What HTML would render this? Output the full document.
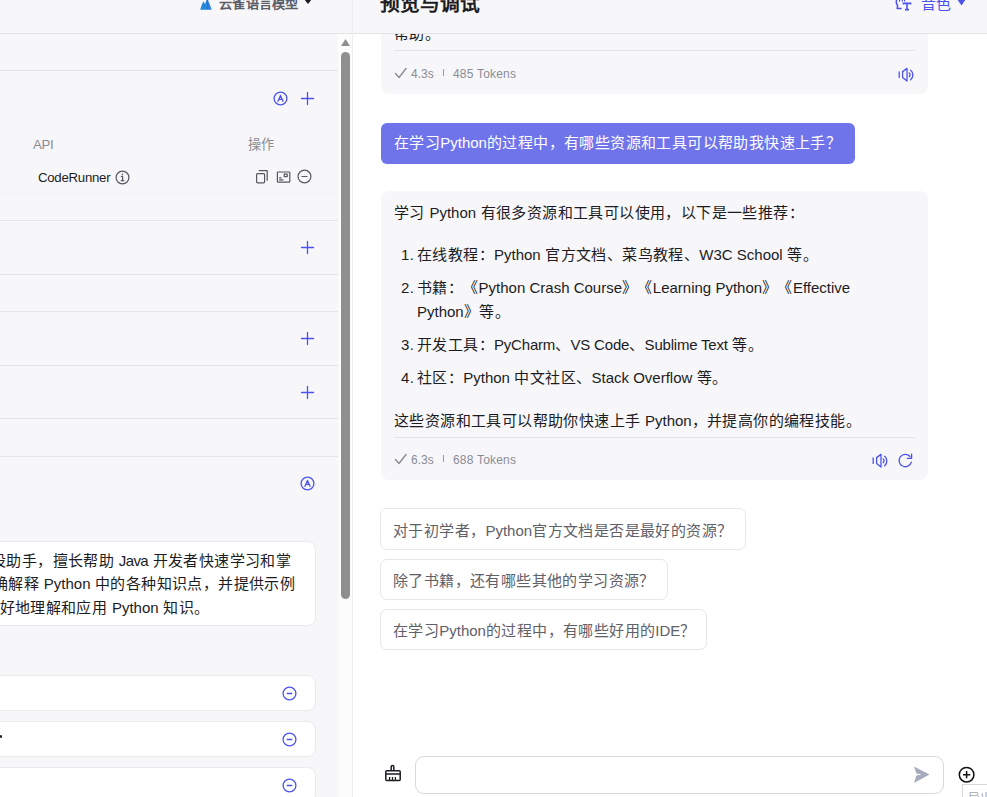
<!DOCTYPE html>
<html lang="zh-CN">
<head>
<meta charset="utf-8">
<style>
*{margin:0;padding:0;box-sizing:border-box}
html,body{width:987px;height:797px;overflow:hidden;background:#fff}
body{position:relative;font-family:"Liberation Sans",sans-serif;color:#1d1c23}
.a{position:absolute}
.t{position:absolute;white-space:nowrap;line-height:1;text-spacing-trim:space-all}
.ln{position:absolute;height:1px;background:#e4e4e8}
svg{position:absolute;overflow:visible}
.L{letter-spacing:0}
.ib{stroke:#4d53e8;fill:none;stroke-width:1.3;stroke-linecap:round;stroke-linejoin:round}
.ig{stroke:#55565f;fill:none;stroke-width:1.2;stroke-linecap:round;stroke-linejoin:round}
</style>
</head>
<body>
<!-- ============ LEFT PANEL ============ -->
<div class="a" style="left:0;top:0;width:352px;height:797px;background:#f7f7fa"></div>
<div class="a" style="left:338px;top:34px;width:14px;height:763px;background:#fcfcfc"></div>
<div class="a" style="left:352px;top:0;width:1px;height:797px;background:#ededf0"></div>
<div class="ln" style="left:0;top:33px;width:352px"></div>

<!-- header dropdown -->
<svg style="left:199px;top:-2px" width="14" height="13" viewBox="0 0 14 13"><defs><linearGradient id="g1" x1="0" y1="0" x2="1" y2="0"><stop offset="0" stop-color="#1b8bd6"/><stop offset="0.55" stop-color="#2a86dc"/><stop offset="0.62" stop-color="#4c5ae6"/><stop offset="0.75" stop-color="#2c84dc"/><stop offset="1" stop-color="#1e8ad8"/></linearGradient></defs><path d="M1.2 11.7 C2.2 8.5 3 6 4.5 3.2 L6 6.2 C6.8 3.8 7.6 1.5 8.4 0 C9.3 3 10.6 6 12.8 11.7 Z" fill="url(#g1)"/></svg>
<div class="t" style="left:219px;top:-3px;font-size:13.2px;letter-spacing:0.25px;color:#5c5c66;font-weight:bold">云雀语言模型</div>
<svg style="left:304px;top:-1px" width="8" height="6" viewBox="0 0 8 6"><path d="M0 0 L8 0 L4 5 Z" fill="#1d1c23"/></svg>

<div class="ln" style="left:0;top:70px;width:338px"></div>
<div class="ln" style="left:0;top:220px;width:338px"></div>
<div class="ln" style="left:0;top:274px;width:338px"></div>
<div class="ln" style="left:0;top:311px;width:338px"></div>
<div class="ln" style="left:0;top:365px;width:338px"></div>
<div class="ln" style="left:0;top:418px;width:338px"></div>
<div class="ln" style="left:0;top:456px;width:338px"></div>
<div class="ln" style="left:0;top:192px;width:338px;background:#f4f4f7"></div>

<!-- plugin section icons -->
<svg style="left:273px;top:91px" width="15" height="15" viewBox="0 0 15 15"><circle class="ib" cx="7.5" cy="7.5" r="6.4"/><path class="ib" d="M5 10.3 L7.5 4.4 L10 10.3 M5.9 8.3 H9.1" stroke-width="1.2"/></svg>
<svg style="left:301px;top:92px" width="13" height="13" viewBox="0 0 13 13"><path class="ib" d="M6.5 0.5 V12.5 M0.5 6.5 H12.5" stroke-linecap="butt"/></svg>

<div class="t" style="left:33px;top:138px;font-size:13.2px;letter-spacing:-0.3px;color:#8b8c94">API</div>
<div class="t" style="left:248px;top:138px;font-size:13.2px;color:#8b8c94">操作</div>
<div class="t" style="left:38px;top:171px;font-size:13.2px;letter-spacing:-0.25px;color:#1d1c23">CodeRunner</div>
<svg style="left:115px;top:170px" width="15" height="15" viewBox="0 0 15 15"><circle class="ig" cx="7.5" cy="7.5" r="6.4"/><path class="ig" d="M6.3 6.3 H7.6 V10.6 M6.2 10.6 H8.9"/><circle cx="7.5" cy="4.3" r="0.8" fill="#55565f"/></svg>
<!-- row action icons -->
<svg style="left:255px;top:169px" width="14" height="15" viewBox="0 0 14 15"><rect class="ig" x="1.6" y="4.6" width="8" height="9.2" rx="1"/><path class="ig" d="M4.3 1.6 H12.2 V11.2"/></svg>
<svg style="left:276px;top:170px" width="15" height="14" viewBox="0 0 15 14"><rect class="ig" x="1.4" y="2" width="12.4" height="10.2" rx="0.8"/><rect class="ig" x="8.2" y="4.2" width="3" height="2.4"/><path class="ig" d="M3.6 7.8 H5.2 M3.6 9.9 H7"/></svg>
<svg style="left:297px;top:169px" width="15" height="15" viewBox="0 0 15 15"><circle class="ig" cx="7.5" cy="7.5" r="6.4"/><path class="ig" d="M5 7.5 H10"/></svg>

<svg style="left:301px;top:241px" width="13" height="13" viewBox="0 0 13 13"><path class="ib" d="M6.5 0.5 V12.5 M0.5 6.5 H12.5" stroke-linecap="butt"/></svg>
<svg style="left:301px;top:332px" width="13" height="13" viewBox="0 0 13 13"><path class="ib" d="M6.5 0.5 V12.5 M0.5 6.5 H12.5" stroke-linecap="butt"/></svg>
<svg style="left:301px;top:386px" width="13" height="13" viewBox="0 0 13 13"><path class="ib" d="M6.5 0.5 V12.5 M0.5 6.5 H12.5" stroke-linecap="butt"/></svg>

<svg style="left:300px;top:476px" width="15" height="15" viewBox="0 0 15 15"><circle class="ib" cx="7.5" cy="7.5" r="6.4"/><path class="ib" d="M5 10.3 L7.5 4.4 L10 10.3 M5.9 8.3 H9.1" stroke-width="1.2"/></svg>

<!-- persona text box -->
<div class="a" style="left:-40px;top:541px;width:356px;height:85px;background:#fff;border:1px solid #e9e9ee;border-radius:8px;overflow:hidden">
</div>
<div class="t" style="left:-9px;top:553px;font-size:15px;letter-spacing:0.4px;color:#1d1c23">设助手，擅长帮助 <span class="L" style="letter-spacing:-0.6px">Java</span> 开发者快速学习和掌</div>
<div class="t" style="left:-7px;top:576px;font-size:15px;letter-spacing:0.4px;color:#1d1c23">确解释 <span class="L">Python</span> 中的各种知识点，并提供示例</div>
<div class="t" style="left:-0.5px;top:600px;font-size:15px;letter-spacing:0.4px;color:#1d1c23">好地理解和应用 <span class="L">Python</span> 知识。</div>

<!-- list boxes -->
<div class="a" style="left:-40px;top:675px;width:356px;height:36px;background:#fff;border:1px solid #e9e9ee;border-radius:8px"></div>
<div class="a" style="left:-40px;top:721px;width:356px;height:36px;background:#fff;border:1px solid #e9e9ee;border-radius:8px"></div>
<div class="a" style="left:-40px;top:767px;width:356px;height:36px;background:#fff;border:1px solid #e9e9ee;border-radius:8px"></div>
<div class="a" style="left:0;top:735px;width:2px;height:3px;background:#1d1c23;border-radius:1px"></div>
<svg style="left:282px;top:686px" width="15" height="15" viewBox="0 0 15 15"><circle class="ib" cx="7.5" cy="7.5" r="6.4" stroke-width="1.2"/><path class="ib" d="M5.2 7.5 H9.8"/></svg>
<svg style="left:282px;top:732px" width="15" height="15" viewBox="0 0 15 15"><circle class="ib" cx="7.5" cy="7.5" r="6.4" stroke-width="1.2"/><path class="ib" d="M5.2 7.5 H9.8"/></svg>
<svg style="left:282px;top:778px" width="15" height="15" viewBox="0 0 15 15"><circle class="ib" cx="7.5" cy="7.5" r="6.4" stroke-width="1.2"/><path class="ib" d="M5.2 7.5 H9.8"/></svg>

<!-- scrollbar -->
<svg style="left:341px;top:39px" width="9" height="7" viewBox="0 0 9 7"><path d="M0 7 L4.5 0 L9 7 Z" fill="#8f8f8f"/></svg>
<div class="a" style="left:341px;top:52px;width:9px;height:547px;background:#8f8f8f;border-radius:4.5px"></div>

<!-- ============ RIGHT PANEL ============ -->
<!-- card 1 (partially under header) -->
<div class="a" style="left:381px;top:-60px;width:547px;height:154px;background:#f7f7fa;border-radius:8px"></div>
<div class="t" style="left:394px;top:26px;font-size:15px;letter-spacing:0.4px;color:#1d1c23">帮助。</div>
<div class="ln" style="left:394px;top:50px;width:521px"></div>

<div class="a" style="left:353px;top:0;width:634px;height:33px;background:#f7f7fa"></div>
<div class="ln" style="left:353px;top:33px;width:634px"></div>
<div class="t" style="left:380px;top:-5px;font-size:19.8px;font-weight:bold;color:#1d1c23">预览与调试</div>
<!-- voice icon + 音色 -->
<svg style="left:890px;top:0" width="22" height="12" viewBox="0 0 22 12"><path d="M6.8 -0.5 C5.9 1.8 6.2 3.8 7.6 5.4 L7.2 8.6 H11.6" fill="none" stroke="#4d53e8" stroke-width="1.5" stroke-linejoin="round"/><path d="M9.6 0.6 V1 M12.3 0.6 V1 M14.6 0.6 V1" stroke="#4d53e8" stroke-width="1.3" stroke-linecap="round"/><path d="M13.4 4.6 V3.4 H20.6 V4.6 M17 3.4 V9.6 M15 9.6 H19" fill="none" stroke="#4d53e8" stroke-width="1.6"/></svg>
<div class="t" style="left:921px;top:-4px;font-size:15px;letter-spacing:0.4px;font-weight:500;color:#4d53e8">音色</div>
<svg style="left:957px;top:-1px" width="9" height="7" viewBox="0 0 9 7"><path d="M0 0 L9 0 L4.5 6.5 Z" fill="#4d53e8"/></svg>

<!-- card1 meta -->
<svg style="left:394px;top:67px" width="13" height="12" viewBox="0 0 13 12"><path d="M1.5 6.5 L5 10.5 L12 1.5" fill="none" stroke="#8b8c94" stroke-width="1.4" stroke-linecap="round" stroke-linejoin="round"/></svg>
<div class="t" style="left:411px;top:67.5px;font-size:12px;color:#8b8c94">4.3s</div>
<div class="a" style="left:443px;top:69px;width:1px;height:7px;background:#9a9ba3"></div>
<div class="t" style="left:453px;top:67.5px;font-size:12px;color:#8b8c94;letter-spacing:0.2px">485 Tokens</div>
<svg style="left:898px;top:67px" width="16" height="15" viewBox="0 0 16 15"><path class="ib" d="M1.2 5 V10.4" stroke-width="1.5" stroke-linecap="butt"/><path class="ib" d="M4.6 4.6 L9 1.4 V14 L4.6 10.6 Z" stroke-width="1.4"/><path class="ib" d="M11.2 5.9 C12.4 6.8 12.4 8.8 11.2 9.7" stroke-width="1.4"/><path class="ib" d="M12.6 3.2 C15.6 5.5 15.6 10.5 12.6 12.8" stroke-width="1.5"/></svg>

<!-- user bubble -->
<div class="a" style="left:381px;top:123px;width:474px;height:41px;background:#7074ea;border-radius:6px"></div>
<div class="t" style="left:394px;top:135px;font-size:15px;letter-spacing:0.4px;color:#fff;font-weight:500">在学习<span class="L">Python</span>的过程中，有哪些资源和工具可以帮助我快速上手？</div>

<!-- card 2 -->
<div class="a" style="left:381px;top:191px;width:547px;height:289px;background:#f7f7fa;border-radius:8px"></div>
<div class="t" style="left:394px;top:205px;font-size:15px;letter-spacing:0.4px">学习 <span class="L">Python</span> 有很多资源和工具可以使用，以下是一些推荐：</div>
<div class="t" style="left:401px;top:247px;font-size:15px;letter-spacing:0.4px">1.</div>
<div class="t" style="left:417px;top:247px;font-size:15px;letter-spacing:0.4px">在线教程：<span class="L">Python</span> 官方文档、菜鸟教程、<span class="L">W3C School</span> 等。</div>
<div class="t" style="left:401px;top:280px;font-size:15px;letter-spacing:0.4px">2.</div>
<div class="t" style="left:417px;top:280px;font-size:15px;letter-spacing:0.4px">书籍：《<span class="L">Python Crash Course</span>》《<span class="L">Learning Python</span>》《<span class="L">Effective</span></div>
<div class="t" style="left:417px;top:303.5px;font-size:15px;letter-spacing:0.4px"><span class="L">Python</span>》等。</div>
<div class="t" style="left:401px;top:337px;font-size:15px;letter-spacing:0.4px">3.</div>
<div class="t" style="left:417px;top:337px;font-size:15px;letter-spacing:0.4px">开发工具：<span class="L" style="letter-spacing:-0.2px">PyCharm</span>、<span class="L" style="letter-spacing:-0.2px">VS Code</span>、<span class="L" style="letter-spacing:-0.2px">Sublime Text</span> 等。</div>
<div class="t" style="left:401px;top:370px;font-size:15px;letter-spacing:0.4px">4.</div>
<div class="t" style="left:417px;top:370px;font-size:15px;letter-spacing:0.4px">社区：<span class="L">Python</span> 中文社区、<span class="L">Stack Overflow</span> 等。</div>
<div class="t" style="left:394px;top:413px;font-size:15px;letter-spacing:0.4px">这些资源和工具可以帮助你快速上手 <span class="L">Python</span>，并提高你的编程技能。</div>
<div class="ln" style="left:394px;top:437px;width:521px"></div>
<svg style="left:394px;top:453px" width="13" height="12" viewBox="0 0 13 12"><path d="M1.5 6.5 L5 10.5 L12 1.5" fill="none" stroke="#8b8c94" stroke-width="1.4" stroke-linecap="round" stroke-linejoin="round"/></svg>
<div class="t" style="left:411px;top:453.5px;font-size:12px;color:#8b8c94">6.3s</div>
<div class="a" style="left:443px;top:455px;width:1px;height:7px;background:#9a9ba3"></div>
<div class="t" style="left:453px;top:453.5px;font-size:12px;color:#8b8c94;letter-spacing:0.2px">688 Tokens</div>
<svg style="left:872px;top:453px" width="16" height="15" viewBox="0 0 16 15"><path class="ib" d="M1.2 5 V10.4" stroke-width="1.5" stroke-linecap="butt"/><path class="ib" d="M4.6 4.6 L9 1.4 V14 L4.6 10.6 Z" stroke-width="1.4"/><path class="ib" d="M11.2 5.9 C12.4 6.8 12.4 8.8 11.2 9.7" stroke-width="1.4"/><path class="ib" d="M12.6 3.2 C15.6 5.5 15.6 10.5 12.6 12.8" stroke-width="1.5"/></svg>
<svg style="left:898px;top:453px" width="15" height="15" viewBox="0 0 15 15"><path class="ib" d="M13.3 9.1 A6.2 6.2 0 1 1 12.05 3.5" stroke-width="1.5"/><path class="ib" d="M13.6 1.2 V5.3 H9.4" stroke-width="1.5" stroke-linecap="butt" stroke-linejoin="miter"/></svg>

<!-- suggestions -->
<div class="a" style="left:380px;top:508px;width:366px;height:42px;background:#fff;border:1px solid #e6e6eb;border-radius:7px"></div>
<div class="t" style="left:393px;top:523px;font-size:15px;letter-spacing:0.4px;color:#5f6068">对于初学者，<span class="L">Python</span>官方文档是否是最好的资源？</div>
<div class="a" style="left:380px;top:559px;width:288px;height:41px;background:#fff;border:1px solid #e6e6eb;border-radius:7px"></div>
<div class="t" style="left:393px;top:573px;font-size:15px;letter-spacing:0.4px;color:#5f6068">除了书籍，还有哪些其他的学习资源？</div>
<div class="a" style="left:380px;top:609px;width:327px;height:41px;background:#fff;border:1px solid #e6e6eb;border-radius:7px"></div>
<div class="t" style="left:393px;top:623px;font-size:15px;letter-spacing:0.4px;color:#5f6068">在学习<span class="L">Python</span>的过程中，有哪些好用的<span class="L">IDE</span>？</div>

<!-- bottom input -->
<svg style="left:384px;top:764px" width="18" height="18" viewBox="0 0 18 18"><path d="M7.2 6.6 V2.8 A1.3 1.3 0 0 1 9.8 2.8 V6.6" fill="none" stroke="#1d1c23" stroke-width="1.5"/><rect x="1.8" y="6.8" width="14.4" height="9.6" rx="1" fill="none" stroke="#1d1c23" stroke-width="1.5"/><path d="M1.8 10 H16.2 M5.6 13 V16.4 M8.5 13 V16.4 M11.4 13 V16.4" fill="none" stroke="#1d1c23" stroke-width="1.3"/></svg>
<div class="a" style="left:415px;top:756px;width:529px;height:38px;background:#fff;border:1px solid #d9d9dd;border-radius:9px"></div>
<svg style="left:913px;top:766px" width="17" height="17" viewBox="0 0 17 17"><path d="M1 0.5 L16.5 8.5 L1 17 L3.4 9.6 L9 8.5 L3.4 7.4 Z" fill="#a7abbd"/></svg>
<svg style="left:958px;top:766px" width="17" height="17" viewBox="0 0 17 17"><circle cx="8.6" cy="8.7" r="7.3" fill="none" stroke="#111" stroke-width="1.5"/><path d="M5 8.7 H12.3 M8.6 5.1 V12.3" stroke="#111" stroke-width="1.5"/></svg>
<div class="a" style="left:962px;top:784px;width:40px;height:30px;background:#fff;border:1px solid #d6d6da"></div>
<div class="t" style="left:968px;top:793px;font-size:12px;color:#a8a8b0">导出</div>
</body>
</html>
